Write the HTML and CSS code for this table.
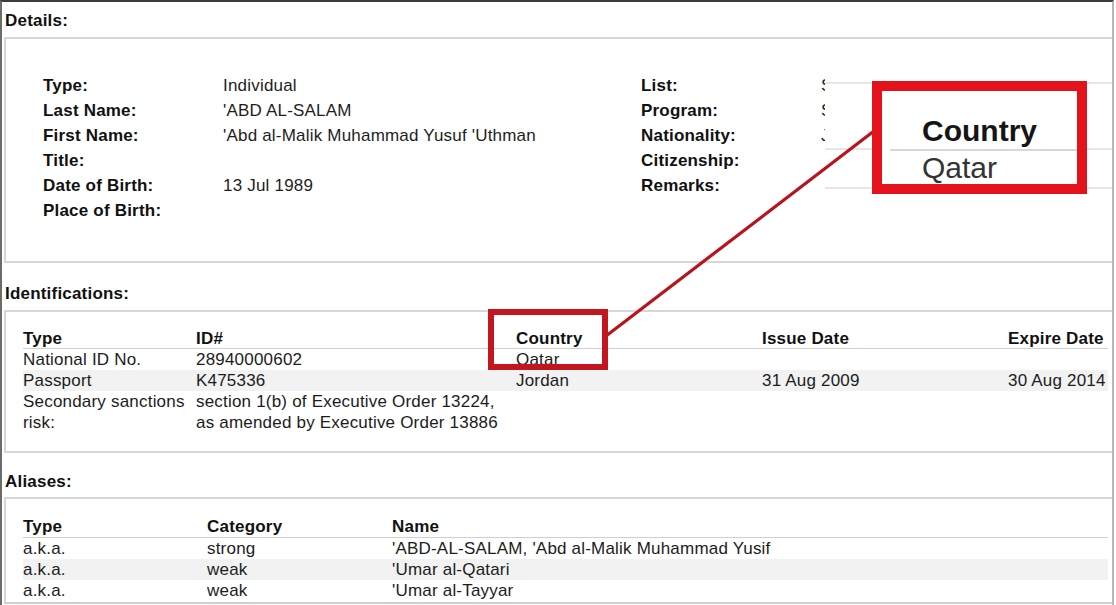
FILE: index.html
```html
<!DOCTYPE html>
<html lang="en">
<head>
<meta charset="utf-8">
<title>Sanctions List Search - Details</title>
<link rel="stylesheet" href="styles.css">
</head>
<body>
<div class="frame">
  <section class="section">
    <div class="sec-head sec-head-first">Details:</div>
    <div class="sec-box details-box">
      <div class="details-grid">
        <div class="lbl">Type:</div><div class="val">Individual</div><div class="lbl">List:</div><div class="val">SDN</div>
        <div class="lbl">Last Name:</div><div class="val">'ABD AL-SALAM</div><div class="lbl">Program:</div><div class="val">SDGT</div>
        <div class="lbl">First Name:</div><div class="val">'Abd al-Malik Muhammad Yusuf 'Uthman</div><div class="lbl">Nationality:</div><div class="val">Jordan</div>
        <div class="lbl">Title:</div><div class="val"></div><div class="lbl">Citizenship:</div><div class="val"></div>
        <div class="lbl">Date of Birth:</div><div class="val">13 Jul 1989</div><div class="lbl">Remarks:</div><div class="val"></div>
        <div class="lbl">Place of Birth:</div><div class="val"></div><div></div><div></div>
      </div>
    </div>
  </section>

  <section class="section">
    <div class="sec-head sec-head-ident">Identifications:</div>
    <div class="sec-box ident-box">
      <div class="tbl ident-tbl">
        <div class="tr th"><div>Type</div><div>ID#</div><div>Country</div><div>Issue Date</div><div>Expire Date</div></div>
        <div class="tr"><div>National ID No.</div><div>28940000602</div><div>Qatar</div><div></div><div></div></div>
        <div class="tr alt"><div>Passport</div><div>K475336</div><div>Jordan</div><div>31 Aug 2009</div><div>30 Aug 2014</div></div>
        <div class="tr"><div>Secondary sanctions<br>risk:</div><div>section 1(b) of Executive Order 13224,<br>as amended by Executive Order 13886</div><div></div><div></div><div></div></div>
      </div>
    </div>
  </section>

  <section class="section">
    <div class="sec-head sec-head-alias">Aliases:</div>
    <div class="sec-box alias-box">
      <div class="tbl alias-tbl">
        <div class="tr th"><div>Type</div><div>Category</div><div>Name</div></div>
        <div class="tr"><div>a.k.a.</div><div>strong</div><div>'ABD-AL-SALAM, 'Abd al-Malik Muhammad Yusif</div></div>
        <div class="tr alt"><div>a.k.a.</div><div>weak</div><div>'Umar al-Qatari</div></div>
        <div class="tr"><div>a.k.a.</div><div>weak</div><div>'Umar al-Tayyar</div></div>
      </div>
    </div>
  </section>
</div>

<div class="zoom-panel">
  <div class="zp-line zp-l1"></div>
  <div class="zp-line zp-l2"></div>
  <div class="zp-line zp-l3"></div>
</div>

<svg class="connector" width="1116" height="605" viewBox="0 0 1116 605" aria-hidden="true">
  <line x1="606" y1="336" x2="874" y2="131" stroke="#b8141d" stroke-width="3.2" stroke-linecap="round"/>
</svg>

<div class="mark-small"></div>

<div class="callout">
  <div class="co-head">Country</div>
  <div class="co-val">Qatar</div>
</div>
</body>
</html>
```

FILE: styles.css
```css
html, body {
  margin: 0;
  padding: 0;
  background: #ffffff;
}

body {
  position: relative;
  width: 1116px;
  height: 605px;
  overflow: hidden;
  font-family: "Liberation Sans", Arial, Helvetica, sans-serif;
  font-size: 17px;
  letter-spacing: 0.2px;
  color: #1c1c1c;
}

.frame {
  box-sizing: border-box;
  width: 1114px;
  height: 605px;
  border-top: 2px solid #3c3c3c;
  border-left: 2px solid #6c6c6c;
  border-right: 2px solid #b8b8b8;
  display: flex;
  flex-direction: column;
}

.sec-head {
  font-weight: bold;
  color: #111;
  line-height: 21px;
  padding-left: 3px;
}

.sec-head-first {
  padding-top: 8px;
  padding-bottom: 6px;
}

.sec-head-ident {
  padding-top: 20px;
  padding-bottom: 6px;
}

.sec-head-alias {
  padding-top: 18px;
  padding-bottom: 5px;
}

.sec-box {
  margin-left: 2px;
  border-top: 2px solid #d6d6d6;
  border-left: 2px solid #d6d6d6;
  border-bottom: 2px solid #d6d6d6;
}

.alias-box {
  border-bottom-color: #cfcfcf;
}

/* Details */
.details-box {
  padding: 34px 0 38px 37px;
}

.details-grid {
  display: grid;
  grid-template-columns: 180px 418px 180px 1fr;
  grid-auto-rows: 25px;
  line-height: 25px;
}

.lbl {
  font-weight: bold;
  color: #111;
}

.val {
  color: #1e1e1e;
  white-space: nowrap;
}

/* Tables */
.ident-box {
  padding: 16px 4px 18px 17px;
}

.alias-box {
  padding: 17px 4px 1px 17px;
}

.tbl {
  display: flex;
  flex-direction: column;
  line-height: 21px;
}

.tr {
  display: grid;
  white-space: nowrap;
}

.ident-tbl .tr {
  grid-template-columns: 173px 320px 246px 246px 1fr;
}

.alias-tbl .tr {
  grid-template-columns: 184px 185px 1fr;
}

.th {
  font-weight: bold;
  color: #111;
  height: 20px;
  line-height: 21px;
  border-bottom: 1px solid #cfcfcf;
}

.alias-tbl .th {
  height: 21px;
}

.alt {
  background: #f2f2f2;
}

/* Overlays */
.zoom-panel {
  position: absolute;
  left: 825px;
  top: 72px;
  width: 287px;
  height: 128px;
  background: #ffffff;
}

.zp-line {
  position: absolute;
  left: 0;
  right: 0;
  height: 2px;
  background: #e6e6e6;
}

.zp-l1 { top: 10px; }
.zp-l2 { top: 76px; }
.zp-l3 { top: 115px; }

.connector {
  position: absolute;
  left: 0;
  top: 0;
  pointer-events: none;
}

.mark-small {
  position: absolute;
  left: 488px;
  top: 309px;
  width: 108px;
  height: 49px;
  border: 6px solid #c4161f;
}

.callout {
  position: absolute;
  left: 872px;
  top: 81px;
  box-sizing: border-box;
  width: 215px;
  height: 113px;
  border: 10px solid #e3121b;
  background: #ffffff;
  padding: 25px 0 0 0;
  overflow: hidden;
  letter-spacing: 0;
}

.co-head {
  margin-left: 8px;
  padding-left: 32px;
  font-size: 30px;
  line-height: 30px;
  font-weight: bold;
  color: #151515;
  padding-bottom: 3px;
  border-bottom: 2px solid #d8d8d8;
}

.co-val {
  padding-left: 40px;
  margin-top: 2px;
  font-size: 30px;
  line-height: 30px;
  color: #333;
}
```
